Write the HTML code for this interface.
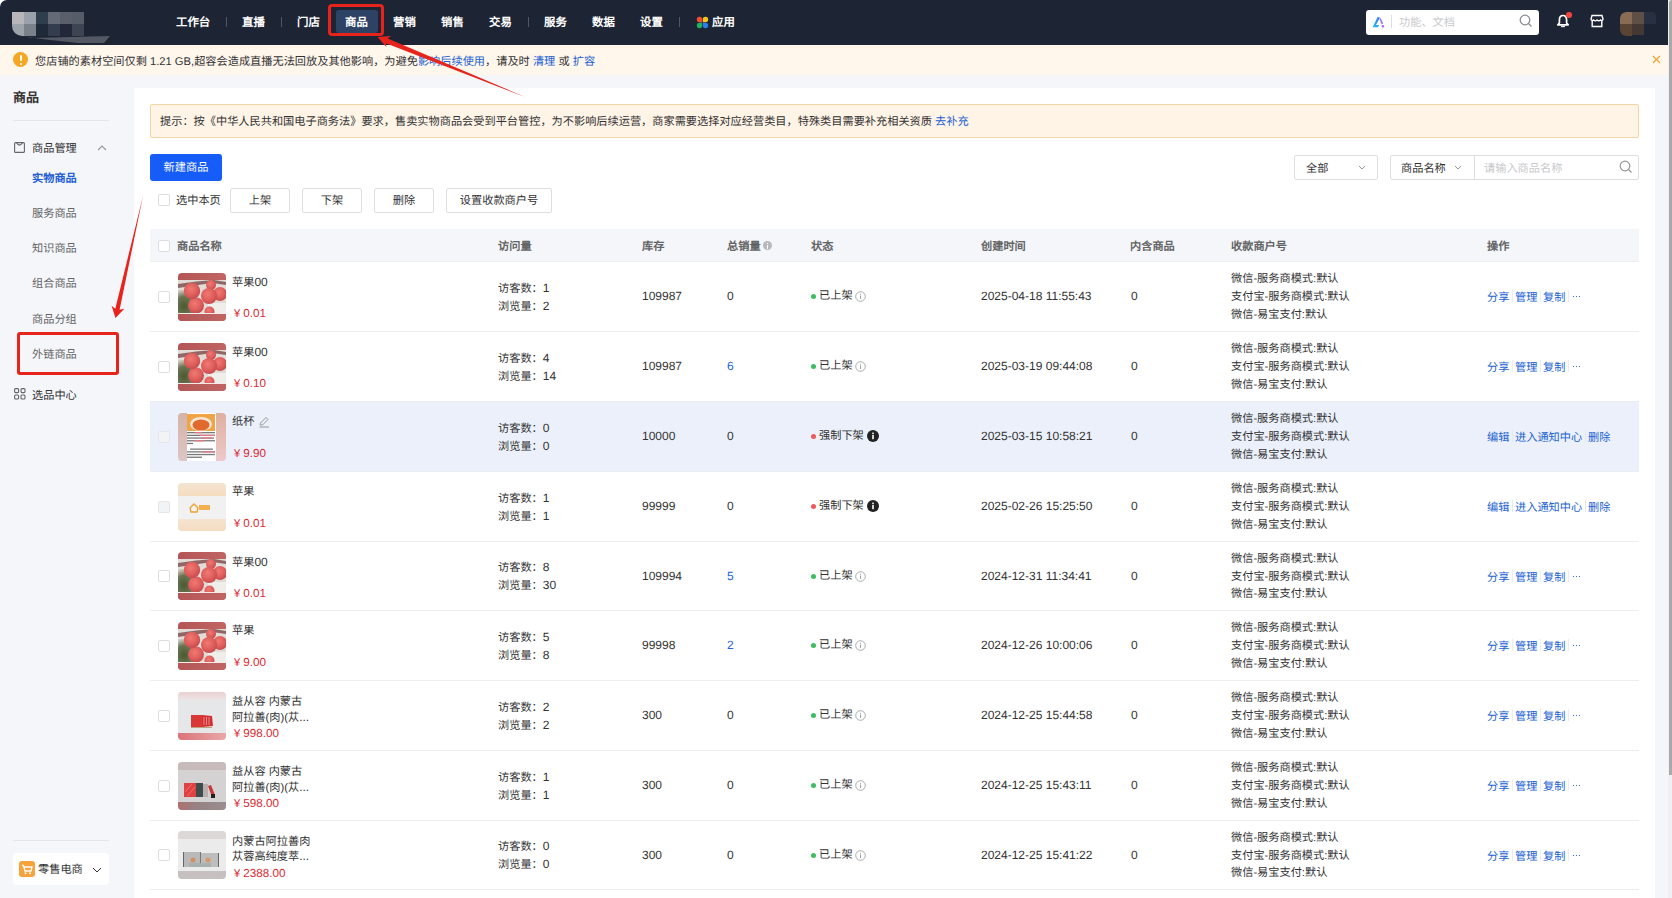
<!DOCTYPE html>
<html lang="zh-CN">
<head>
<meta charset="utf-8">
<style>
*{margin:0;padding:0;box-sizing:border-box}
html,body{width:1672px;height:898px;overflow:hidden;text-rendering:geometricPrecision;background:#f5f6fa;font-family:"Liberation Sans",sans-serif;color:#323233;font-size:11.2px}
.abs{position:absolute}
.t{position:absolute;white-space:nowrap;line-height:14px}
#hdr{position:absolute;left:0;top:0;width:1672px;height:45px;background:#1d2434}
.nav{position:absolute;top:16px;color:#fff;font-size:11.4px;font-weight:bold;line-height:14px;white-space:nowrap}
.sep{position:absolute;top:17px;width:1px;height:10px;background:#50576a}
#notice{position:absolute;left:0;top:45px;width:1672px;height:30px;background:#fff6ec}
#card{position:absolute;left:134px;top:88px;width:1521px;height:810px;background:#fff}
.lnk{color:#2262d2}
.c.lnk,.t .lnk{color:#2262d2}
.btn{position:absolute;height:25px;border:1px solid #dcdee0;border-radius:2px;background:#fff;color:#323233;font-size:11.2px;line-height:23px;text-align:center}
.cb{position:absolute;width:12px;height:12px;border:1px solid #dcdee0;border-radius:2px;background:#fff}
.row{position:absolute;left:150px;width:1489px;height:70px;border-bottom:1px solid #ebedf0}
.th{position:absolute;top:240px;font-size:11.2px;font-weight:bold;color:#646566;line-height:14px;white-space:nowrap}
.c{position:absolute;font-size:11.2px;line-height:14px;white-space:nowrap;color:#323233}
.price{color:#dc2832}
</style>
</head>
<body>

<div id="hdr"></div>
<svg class="abs" style="left:0;top:0" width="120" height="45" viewBox="0 0 120 45"><path d="M0 0 H7 A7 7 0 0 0 0 7 Z" fill="#fff"/><polygon points="16,34 30,38 110,36 104,43 78,43 50,40 26,37" fill="#535864"/></svg>
<div class="abs" style="left:12px;top:12px;width:12px;height:12px;background:#b8b6b8"></div>
<div class="abs" style="left:24px;top:12px;width:12px;height:12px;background:#9aa1aa"></div>
<div class="abs" style="left:36px;top:12px;width:12px;height:12px;background:#2f3e4d"></div>
<div class="abs" style="left:48px;top:12px;width:12px;height:12px;background:#646b77"></div>
<div class="abs" style="left:60px;top:12px;width:12px;height:12px;background:#5b5f6b"></div>
<div class="abs" style="left:72px;top:12px;width:12px;height:12px;background:#575c69"></div>
<div class="abs" style="left:12px;top:24px;width:12px;height:12px;background:#9da3ab;border-radius:0 0 0 10px;"></div>
<div class="abs" style="left:24px;top:24px;width:12px;height:12px;background:#7a818b;"></div>
<div class="abs" style="left:36px;top:24px;width:12px;height:12px;background:#1f2a38;"></div>
<div class="abs" style="left:48px;top:24px;width:12px;height:12px;background:#343d4e;"></div>
<div class="abs" style="left:60px;top:24px;width:12px;height:12px;background:#232739;"></div>
<div class="abs" style="left:72px;top:24px;width:12px;height:12px;background:#3e4452;"></div>
<div class="abs" style="left:336px;top:10px;width:42px;height:23px;background:#2e4266;border-radius:3px"></div>
<div class="nav" style="left:176px">工作台</div>
<div class="nav" style="left:242px">直播</div>
<div class="nav" style="left:297px">门店</div>
<div class="nav" style="left:345px">商品</div>
<div class="nav" style="left:393px">营销</div>
<div class="nav" style="left:441px">销售</div>
<div class="nav" style="left:489px">交易</div>
<div class="nav" style="left:544px">服务</div>
<div class="nav" style="left:592px">数据</div>
<div class="nav" style="left:640px">设置</div>
<div class="sep" style="left:226px"></div>
<div class="sep" style="left:281px"></div>
<div class="sep" style="left:528px"></div>
<div class="sep" style="left:679px"></div>
<svg class="abs" style="left:696px;top:16px" width="13" height="13" viewBox="0 0 13 13"><path d="M6.2 6.2 H3.6 A2.7 2.7 0 1 1 6.2 3.6 Z" fill="#f0502e"/><path d="M6.8 6.2 V3.6 A2.7 2.7 0 1 1 9.4 6.2 Z" fill="#f8c21c"/><path d="M6.2 6.8 V9.4 A2.7 2.7 0 1 1 3.6 6.8 Z" fill="#1fb35a"/><path d="M6.8 6.8 H9.4 A2.7 2.7 0 1 1 6.8 9.4 Z" fill="#2b7de9"/></svg>
<div class="nav" style="left:712px">应用</div>
<div class="abs" style="left:1366px;top:10px;width:173px;height:25px;background:#fff;border-radius:3px"></div>
<svg class="abs" style="left:1370px;top:14px" width="16" height="16" viewBox="0 0 16 16"><defs><linearGradient id="ga" x1="0" y1="1" x2="1" y2="0"><stop offset="0" stop-color="#1fc8f0"/><stop offset="1" stop-color="#3a6ff0"/></linearGradient></defs><polygon points="7.6,3 10,3.6 6,11 9,11 8,13.3 2.6,13.3" fill="url(#ga)"/><polygon points="9.6,5.2 10.6,3.8 13.2,9.6 11.6,10.4" fill="#9b7cf0"/><circle cx="12.9" cy="12.2" r="1.2" fill="#9b6cf0"/></svg>
<div class="abs" style="left:1391px;top:15px;width:1px;height:13px;background:#dcdee0"></div>
<div class="t" style="left:1399px;top:16px;color:#c8c9cc;font-size:11.2px">功能、文档</div>
<svg class="abs" style="left:1519px;top:14px" width="14" height="14" viewBox="0 0 14 14"><circle cx="6" cy="6" r="4.8" fill="none" stroke="#8a8c90" stroke-width="1.3"/><path d="M9.5 9.5 L12.5 12.5" stroke="#8a8c90" stroke-width="1.3"/></svg>
<svg class="abs" style="left:1556px;top:14px" width="14" height="14" viewBox="0 0 14 14"><path d="M7 1.5 C4.6 1.5 3.4 3.6 3.4 6 L3.4 9 L1.8 10.8 L12.2 10.8 L10.6 9 L10.6 6 C10.6 3.6 9.4 1.5 7 1.5Z" fill="none" stroke="#fff" stroke-width="1.7" stroke-linejoin="round"/><rect x="5" y="11.6" width="4" height="1.6" fill="#e8e8ee"/></svg>
<div class="abs" style="left:1566px;top:12px;width:5.5px;height:5.5px;border-radius:50%;background:#f0463c"></div>
<svg class="abs" style="left:1590px;top:14px" width="14" height="14" viewBox="0 0 14 14"><path d="M2 1.5 H12 L13 5 C13 6.5 11.5 7 10.5 6 C9.5 7 8 7 7 6 C6 7 4.5 7 3.5 6 C2.5 7 1 6.5 1 5 Z" fill="none" stroke="#fff" stroke-width="1.4"/><path d="M2.2 6.5 V12.5 H11.8 V6.5" fill="none" stroke="#fff" stroke-width="1.4"/></svg>
<div class="abs" style="left:1620px;top:12px;width:36px;height:24px;overflow:hidden;border-radius:6px 0 0 6px"><div class="abs" style="left:0;top:0;width:12px;height:12px;background:#8a6b55;border-radius:6px 0 0 0"></div><div class="abs" style="left:12px;top:0;width:12px;height:12px;background:#5e4f47"></div><div class="abs" style="left:24px;top:0;width:12px;height:12px;background:#283142;border-radius:0 4px 0 0"></div><div class="abs" style="left:0;top:12px;width:12px;height:12px;background:#5a4535;border-radius:0 0 0 6px"></div><div class="abs" style="left:12px;top:12px;width:12px;height:11px;background:#433833"></div></div>
<div id="notice"></div>
<div class="abs" style="left:13px;top:52px;width:15px;height:15px;border-radius:50%;background:#f5a623"></div>
<div class="abs" style="left:19.5px;top:55px;width:2px;height:6px;background:#fff;border-radius:1px"></div>
<div class="abs" style="left:19.5px;top:62.5px;width:2px;height:2px;background:#fff;border-radius:1px"></div>
<div class="t" style="left:35px;top:54.5px;font-size:11.2px;color:#323233">您店铺的素材空间仅剩 1.21 GB,超容会造成直播无法回放及其他影响，为避免<span class="lnk">影响后续使用</span>，请及时 <span class="lnk">清理</span> 或 <span class="lnk">扩容</span></div>
<svg class="abs" style="left:1652px;top:55px" width="9" height="9" viewBox="0 0 9 9"><path d="M1 1 L8 8 M8 1 L1 8" stroke="#f0a030" stroke-width="1.2"/></svg>
<div class="t" style="left:13px;top:90px;font-size:13px;font-weight:bold;color:#323233;line-height:16px">商品</div>
<div class="abs" style="left:13px;top:120px;width:96px;height:1px;background:#e4e6ea"></div>
<svg class="abs" style="left:14px;top:142px" width="11" height="11" viewBox="0 0 11 11"><rect x="0.6" y="0.6" width="9.8" height="9.8" rx="1" fill="none" stroke="#646566" stroke-width="1.1"/><path d="M2.5 0.8 Q5.5 5.5 8.5 0.8" fill="none" stroke="#646566" stroke-width="1.1"/></svg>
<div class="t" style="left:32px;top:142px;color:#323233">商品管理</div>
<svg class="abs" style="left:97px;top:145px" width="10" height="6" viewBox="0 0 10 6"><path d="M1 5 L5 1 L9 5" fill="none" stroke="#999" stroke-width="1.1"/></svg>
<div class="t" style="left:32px;top:172px;color:#1f5fd6;font-weight:bold">实物商品</div>
<div class="t" style="left:32px;top:207px;color:#646566">服务商品</div>
<div class="t" style="left:32px;top:242px;color:#646566">知识商品</div>
<div class="t" style="left:32px;top:277px;color:#646566">组合商品</div>
<div class="t" style="left:32px;top:313px;color:#646566">商品分组</div>
<div class="t" style="left:32px;top:348px;color:#646566">外链商品</div>
<svg class="abs" style="left:13.5px;top:388px" width="12" height="12" viewBox="0 0 12 12"><rect x="0.6" y="0.6" width="4" height="4" rx="1" fill="none" stroke="#646566" stroke-width="1.1"/><rect x="7" y="0.6" width="4" height="4" rx="1" fill="none" stroke="#646566" stroke-width="1.1"/><rect x="0.6" y="7" width="4" height="4" rx="1" fill="none" stroke="#646566" stroke-width="1.1"/><rect x="7" y="7" width="4" height="4" rx="1" fill="none" stroke="#646566" stroke-width="1.1"/></svg>
<div class="t" style="left:32px;top:388.5px;color:#323233">选品中心</div>
<div class="abs" style="left:13px;top:840px;width:96px;height:1px;background:#e4e6ea"></div>
<div class="abs" style="left:13px;top:853px;width:96px;height:32px;background:#fff;border-radius:4px"></div>
<div class="abs" style="left:19px;top:861px;width:16px;height:16px;background:#f7a23a;border-radius:3px"></div>
<svg class="abs" style="left:21px;top:864px" width="12" height="11" viewBox="0 0 12 11"><path d="M1 1.5 H2.5 L4 7 H10 L11 3 H3" fill="none" stroke="#fff" stroke-width="1.3"/><circle cx="4.5" cy="9.2" r="1" fill="#fff"/><circle cx="9" cy="9.2" r="1" fill="#fff"/></svg>
<div class="t" style="left:38px;top:863px;color:#323233">零售电商</div>
<svg class="abs" style="left:91.5px;top:866.5px" width="10" height="6" viewBox="0 0 10 6"><path d="M1 1 L5 5 L9 1" fill="none" stroke="#323233" stroke-width="1"/></svg>
<div id="card"></div>
<div class="abs" style="left:150px;top:104px;width:1489px;height:34px;background:#fff4e6;border:1px solid #f3d5a6;border-radius:2px"></div>
<div class="t" style="left:160px;top:115px;color:#323233">提示：按《中华人民共和国电子商务法》要求，售卖实物商品会受到平台管控，为不影响后续运营，商家需要选择对应经营类目，特殊类目需要补充相关资质 <span class="lnk">去补充</span></div>
<div class="abs" style="left:150px;top:154px;width:72px;height:27px;background:#165cf8;border-radius:3px;color:#fff;font-size:11.2px;font-weight:500;line-height:28px;text-align:center">新建商品</div>
<div class="cb" style="left:158px;top:194px"></div>
<div class="t" style="left:176px;top:194px">选中本页</div>
<div class="btn" style="left:230px;top:188px;width:60px;line-height:24px">上架</div>
<div class="btn" style="left:302px;top:188px;width:60px;line-height:24px">下架</div>
<div class="btn" style="left:374px;top:188px;width:60px;line-height:24px">删除</div>
<div class="btn" style="left:446px;top:188px;width:106px;line-height:24px">设置收款商户号</div>
<div class="abs" style="left:1294px;top:155px;width:84px;height:25px;border:1px solid #dcdee0;border-radius:2px"></div>
<div class="t" style="left:1306px;top:162px">全部</div>
<svg class="abs" style="left:1358px;top:165px" width="8" height="5" viewBox="0 0 8 5"><path d="M1 1 L4 4 L7 1" fill="none" stroke="#969799" stroke-width="1"/></svg>
<div class="abs" style="left:1390px;top:155px;width:249px;height:25px;border:1px solid #dcdee0;border-radius:2px"></div>
<div class="abs" style="left:1474px;top:156px;width:1px;height:23px;background:#dcdee0"></div>
<div class="t" style="left:1401px;top:162px">商品名称</div>
<svg class="abs" style="left:1454px;top:165px" width="8" height="5" viewBox="0 0 8 5"><path d="M1 1 L4 4 L7 1" fill="none" stroke="#969799" stroke-width="1"/></svg>
<div class="t" style="left:1484px;top:162px;color:#c8c9cc">请输入商品名称</div>
<svg class="abs" style="left:1619px;top:160px" width="14" height="14" viewBox="0 0 14 14"><circle cx="6" cy="6" r="4.8" fill="none" stroke="#969799" stroke-width="1.2"/><path d="M9.5 9.5 L12.5 12.5" stroke="#969799" stroke-width="1.2"/></svg>
<div class="abs" style="left:150px;top:229px;width:1489px;height:33px;background:#f4f6fa;border-bottom:1px solid #ebedf0"></div>
<div class="cb" style="left:158px;top:240px"></div>
<div class="th" style="left:177px">商品名称</div>
<div class="th" style="left:498px">访问量</div>
<div class="th" style="left:642px">库存</div>
<div class="th" style="left:727px">总销量</div>
<div class="th" style="left:811px">状态</div>
<div class="th" style="left:981px">创建时间</div>
<div class="th" style="left:1130px">内含商品</div>
<div class="th" style="left:1231px">收款商户号</div>
<div class="th" style="left:1487px">操作</div>
<div class="abs" style="left:763px;top:241px;width:9px;height:9px;border-radius:50%;background:#b8b9bc"></div>
<div class="abs" style="left:767px;top:243px;width:1px;height:1px;background:#fff"></div><div class="abs" style="left:767px;top:245px;width:1px;height:3.5px;background:#fff"></div>
<div class="abs" style="left:150px;top:262px;width:1489px;height:69px;background:#fff"></div>
<div class="abs" style="left:150px;top:331px;width:1489px;height:1px;background:#ebedf0"></div>
<div class="cb" style="left:158px;top:290.5px;"></div>
<svg class="abs" style="left:178px;top:273px" width="48" height="48" viewBox="0 0 48 48"><defs><radialGradient id="ap" cx="0.42" cy="0.38" r="0.65"><stop offset="0" stop-color="#f07a72"/><stop offset="0.55" stop-color="#e0605e"/><stop offset="1" stop-color="#c44a4c"/></radialGradient><radialGradient id="apg" cx="0.3" cy="0.7" r="0.7"><stop offset="0" stop-color="#4a5a32"/><stop offset="0.6" stop-color="#6a7452"/><stop offset="1" stop-color="#cfcabf"/></radialGradient><linearGradient id="apt" x1="0" y1="0" x2="1" y2="0"><stop offset="0" stop-color="#b45656"/><stop offset="1" stop-color="#c06464"/></linearGradient><clipPath id="apc"><rect x="0" y="0" width="48" height="48" rx="4"/></clipPath></defs><g clip-path="url(#apc)"><rect x="0" y="0" width="48" height="48" fill="url(#apt)"/><rect x="0" y="7" width="48" height="33" fill="#e2dcd6"/><rect x="0" y="17" width="20" height="23" fill="url(#apg)"/><rect x="30" y="30" width="18" height="10" fill="#f0eeea"/><path d="M0 11 L18 8.5 L36 7 L48 9 L48 12 L34 10 L0 15 Z" fill="#7a4a4a" opacity="0.8"/><circle cx="33" cy="12" r="5" fill="url(#ap)"/><circle cx="42" cy="21" r="7" fill="url(#ap)"/><circle cx="31.5" cy="38.5" r="5" fill="url(#ap)"/><circle cx="18" cy="32.5" r="8" fill="url(#ap)"/><circle cx="31" cy="23" r="8" fill="url(#ap)"/><circle cx="14" cy="18" r="8.2" fill="url(#ap)"/><rect x="0" y="40" width="48" height="1" fill="#f4ebe8"/><rect x="0" y="41" width="48" height="7" fill="url(#apt)"/></g></svg>
<div class="c" style="left:232px;top:275.0px">苹果<span style="font-size:12px">00</span></div>
<div class="c price" style="left:234px;top:307.0px">¥ <span style="font-size:11.7px">0.01</span></div>
<div class="c" style="left:498px;top:280.5px">访客数：<span style="font-size:12px">1</span></div>
<div class="c" style="left:498px;top:298.5px">浏览量：<span style="font-size:12px">2</span></div>
<div class="c" style="left:642px;top:289.0px;font-size:12px">109987</div>
<div class="c" style="left:727px;top:289.0px;color:#323233;font-size:12px">0</div>
<div class="abs" style="left:811px;top:294.0px;width:5px;height:5px;border-radius:50%;background:#3dbd5f"></div>
<div class="c" style="left:819px;top:289.0px">已上架</div>
<svg class="abs" style="left:854.5px;top:291.0px" width="11" height="11" viewBox="0 0 11 11"><circle cx="5.5" cy="5.5" r="4.8" fill="none" stroke="#a0a2a6" stroke-width="0.9"/><rect x="5" y="4.5" width="1" height="3.5" fill="#a0a2a6"/><rect x="5" y="2.8" width="1" height="1" fill="#a0a2a6"/></svg>
<div class="c" style="left:981px;top:289.0px;font-size:12px">2025-04-18 11:55:43</div>
<div class="c" style="left:1131px;top:289.0px;font-size:12px">0</div>
<div class="c" style="left:1231px;top:272.0px">微信-服务商模式:默认</div>
<div class="c" style="left:1231px;top:290.0px">支付宝-服务商模式:默认</div>
<div class="c" style="left:1231px;top:307.5px">微信-易宝支付:默认</div>
<div class="c lnk" style="left:1487px;top:291.0px">分享</div>
<div class="c lnk" style="left:1515px;top:291.0px">管理</div>
<div class="c lnk" style="left:1543px;top:291.0px">复制</div>
<div class="abs" style="left:1512px;top:290.0px;width:1px;height:12px;background:#ebedf0"></div>
<div class="abs" style="left:1540px;top:290.0px;width:1px;height:12px;background:#ebedf0"></div>
<div class="abs" style="left:1568px;top:290.0px;width:1px;height:12px;background:#ebedf0"></div>
<div class="abs" style="left:1572.5px;top:296.0px;width:1.3px;height:1.3px;background:#3a6fd8"></div>
<div class="abs" style="left:1575.5px;top:296.0px;width:1.3px;height:1.3px;background:#3a6fd8"></div>
<div class="abs" style="left:1578.5px;top:296.0px;width:1.3px;height:1.3px;background:#3a6fd8"></div>
<div class="abs" style="left:150px;top:332px;width:1489px;height:69px;background:#fff"></div>
<div class="abs" style="left:150px;top:401px;width:1489px;height:1px;background:#ebedf0"></div>
<div class="cb" style="left:158px;top:360.5px;"></div>
<svg class="abs" style="left:178px;top:343px" width="48" height="48" viewBox="0 0 48 48"><defs><radialGradient id="ap" cx="0.42" cy="0.38" r="0.65"><stop offset="0" stop-color="#f07a72"/><stop offset="0.55" stop-color="#e0605e"/><stop offset="1" stop-color="#c44a4c"/></radialGradient><radialGradient id="apg" cx="0.3" cy="0.7" r="0.7"><stop offset="0" stop-color="#4a5a32"/><stop offset="0.6" stop-color="#6a7452"/><stop offset="1" stop-color="#cfcabf"/></radialGradient><linearGradient id="apt" x1="0" y1="0" x2="1" y2="0"><stop offset="0" stop-color="#b45656"/><stop offset="1" stop-color="#c06464"/></linearGradient><clipPath id="apc"><rect x="0" y="0" width="48" height="48" rx="4"/></clipPath></defs><g clip-path="url(#apc)"><rect x="0" y="0" width="48" height="48" fill="url(#apt)"/><rect x="0" y="7" width="48" height="33" fill="#e2dcd6"/><rect x="0" y="17" width="20" height="23" fill="url(#apg)"/><rect x="30" y="30" width="18" height="10" fill="#f0eeea"/><path d="M0 11 L18 8.5 L36 7 L48 9 L48 12 L34 10 L0 15 Z" fill="#7a4a4a" opacity="0.8"/><circle cx="33" cy="12" r="5" fill="url(#ap)"/><circle cx="42" cy="21" r="7" fill="url(#ap)"/><circle cx="31.5" cy="38.5" r="5" fill="url(#ap)"/><circle cx="18" cy="32.5" r="8" fill="url(#ap)"/><circle cx="31" cy="23" r="8" fill="url(#ap)"/><circle cx="14" cy="18" r="8.2" fill="url(#ap)"/><rect x="0" y="40" width="48" height="1" fill="#f4ebe8"/><rect x="0" y="41" width="48" height="7" fill="url(#apt)"/></g></svg>
<div class="c" style="left:232px;top:345.0px">苹果<span style="font-size:12px">00</span></div>
<div class="c price" style="left:234px;top:377.0px">¥ <span style="font-size:11.7px">0.10</span></div>
<div class="c" style="left:498px;top:350.5px">访客数：<span style="font-size:12px">4</span></div>
<div class="c" style="left:498px;top:368.5px">浏览量：<span style="font-size:12px">14</span></div>
<div class="c" style="left:642px;top:359.0px;font-size:12px">109987</div>
<div class="c" style="left:727px;top:359.0px;color:#2262d2;font-size:12px">6</div>
<div class="abs" style="left:811px;top:364.0px;width:5px;height:5px;border-radius:50%;background:#3dbd5f"></div>
<div class="c" style="left:819px;top:359.0px">已上架</div>
<svg class="abs" style="left:854.5px;top:361.0px" width="11" height="11" viewBox="0 0 11 11"><circle cx="5.5" cy="5.5" r="4.8" fill="none" stroke="#a0a2a6" stroke-width="0.9"/><rect x="5" y="4.5" width="1" height="3.5" fill="#a0a2a6"/><rect x="5" y="2.8" width="1" height="1" fill="#a0a2a6"/></svg>
<div class="c" style="left:981px;top:359.0px;font-size:12px">2025-03-19 09:44:08</div>
<div class="c" style="left:1131px;top:359.0px;font-size:12px">0</div>
<div class="c" style="left:1231px;top:342.0px">微信-服务商模式:默认</div>
<div class="c" style="left:1231px;top:360.0px">支付宝-服务商模式:默认</div>
<div class="c" style="left:1231px;top:377.5px">微信-易宝支付:默认</div>
<div class="c lnk" style="left:1487px;top:361.0px">分享</div>
<div class="c lnk" style="left:1515px;top:361.0px">管理</div>
<div class="c lnk" style="left:1543px;top:361.0px">复制</div>
<div class="abs" style="left:1512px;top:360.0px;width:1px;height:12px;background:#ebedf0"></div>
<div class="abs" style="left:1540px;top:360.0px;width:1px;height:12px;background:#ebedf0"></div>
<div class="abs" style="left:1568px;top:360.0px;width:1px;height:12px;background:#ebedf0"></div>
<div class="abs" style="left:1572.5px;top:366.0px;width:1.3px;height:1.3px;background:#3a6fd8"></div>
<div class="abs" style="left:1575.5px;top:366.0px;width:1.3px;height:1.3px;background:#3a6fd8"></div>
<div class="abs" style="left:1578.5px;top:366.0px;width:1.3px;height:1.3px;background:#3a6fd8"></div>
<div class="abs" style="left:150px;top:402px;width:1489px;height:69px;background:#ebf0fa"></div>
<div class="abs" style="left:150px;top:471px;width:1489px;height:1px;background:#ebedf0"></div>
<div class="cb" style="left:158px;top:430.5px;background:#f2f3f5;border-color:#e4e6ea"></div>
<svg class="abs" style="left:178px;top:413px" width="48" height="48" viewBox="0 0 48 48"><defs><clipPath id="cpc"><rect x="0" y="0" width="48" height="48" rx="4"/></clipPath><linearGradient id="cpl" x1="0" y1="0" x2="0" y2="1"><stop offset="0" stop-color="#d6b3a8"/><stop offset="1" stop-color="#dcc6c4"/></linearGradient><linearGradient id="cpr" x1="0" y1="0" x2="0" y2="1"><stop offset="0" stop-color="#dfaf9f"/><stop offset="1" stop-color="#eccaca"/></linearGradient></defs><g clip-path="url(#cpc)"><rect x="0" y="0" width="9" height="48" fill="url(#cpl)"/><rect x="38" y="0" width="10" height="48" fill="url(#cpr)"/><rect x="9" y="0" width="29" height="48" fill="#fff"/><rect x="9" y="1" width="28" height="17" fill="#f0a448"/><ellipse cx="23" cy="11" rx="11" ry="7" fill="#f6e6d6"/><ellipse cx="23" cy="12" rx="8.5" ry="5.5" fill="#e2692e"/><rect x="9" y="19" width="28" height="1.3" fill="#7a7a7a"/><rect x="17" y="19" width="7" height="1.3" fill="#e27a86"/><rect x="9" y="21.7" width="28" height="1.3" fill="#7a7a7a"/><rect x="22" y="21.7" width="15" height="1.3" fill="#e27a86"/><rect x="9" y="24.4" width="27" height="1.3" fill="#7a7a7a"/><rect x="24" y="24.4" width="10" height="1.3" fill="#e27a86"/><rect x="9" y="27.1" width="28" height="1.3" fill="#7a7a7a"/><rect x="16" y="27.1" width="10" height="1.3" fill="#e27a86"/><rect x="9" y="29.8" width="6" height="1.3" fill="#7a7a7a"/><rect x="12" y="35.5" width="23" height="1.3" fill="#7a7a7a"/><rect x="9" y="38.2" width="28" height="1.3" fill="#7a7a7a"/><rect x="24" y="38.2" width="13" height="1.3" fill="#e27a86"/><rect x="9" y="40.9" width="28" height="1.3" fill="#7a7a7a"/><rect x="9" y="43.6" width="15" height="1.3" fill="#7a7a7a"/></g></svg>
<div class="c" style="left:232px;top:415.0px">纸杯</div>
<svg class="abs" style="left:258px;top:415.5px" width="12" height="12" viewBox="0 0 12 12"><path d="M2 9 L2.5 7 L8 1.5 L10 3.5 L4.5 9 Z M1.5 11 H11" fill="none" stroke="#969799" stroke-width="1"/></svg>
<div class="c price" style="left:234px;top:447.0px">¥ <span style="font-size:11.7px">9.90</span></div>
<div class="c" style="left:498px;top:420.5px">访客数：<span style="font-size:12px">0</span></div>
<div class="c" style="left:498px;top:438.5px">浏览量：<span style="font-size:12px">0</span></div>
<div class="c" style="left:642px;top:429.0px;font-size:12px">10000</div>
<div class="c" style="left:727px;top:429.0px;color:#323233;font-size:12px">0</div>
<div class="abs" style="left:811px;top:434.0px;width:5px;height:5px;border-radius:50%;background:#ee5a5a"></div>
<div class="c" style="left:819px;top:429.0px">强制下架</div>
<svg class="abs" style="left:867px;top:430.0px" width="12" height="12" viewBox="0 0 12 12"><circle cx="6" cy="6" r="6" fill="#222"/><rect x="5.2" y="5" width="1.6" height="4.2" fill="#fff"/><rect x="5.2" y="2.6" width="1.6" height="1.6" fill="#fff"/></svg>
<div class="c" style="left:981px;top:429.0px;font-size:12px">2025-03-15 10:58:21</div>
<div class="c" style="left:1131px;top:429.0px;font-size:12px">0</div>
<div class="c" style="left:1231px;top:412.0px">微信-服务商模式:默认</div>
<div class="c" style="left:1231px;top:430.0px">支付宝-服务商模式:默认</div>
<div class="c" style="left:1231px;top:447.5px">微信-易宝支付:默认</div>
<div class="c lnk" style="left:1487px;top:431.0px">编辑</div>
<div class="abs" style="left:1512px;top:430.0px;width:1px;height:12px;background:#e4e8f0"></div>
<div class="c lnk" style="left:1515px;top:431.0px">进入通知中心</div>
<div class="abs" style="left:1585px;top:430.0px;width:1px;height:12px;background:#e4e8f0"></div>
<div class="c lnk" style="left:1588px;top:431.0px">删除</div>
<div class="abs" style="left:150px;top:472px;width:1489px;height:69px;background:#fff"></div>
<div class="abs" style="left:150px;top:541px;width:1489px;height:1px;background:#ebedf0"></div>
<div class="cb" style="left:158px;top:500.5px;background:#f2f3f5;border-color:#e4e6ea"></div>
<svg class="abs" style="left:178px;top:483px" width="48" height="48" viewBox="0 0 48 48"><defs><clipPath id="lgc"><rect x="0" y="0" width="48" height="48" rx="4"/></clipPath><linearGradient id="lgt" x1="0" y1="0" x2="0" y2="1"><stop offset="0" stop-color="#f4e4d2"/><stop offset="1" stop-color="#f5dcc0"/></linearGradient></defs><g clip-path="url(#lgc)"><rect x="0" y="0" width="48" height="48" fill="#f1f1f1"/><rect x="0" y="0" width="48" height="13" fill="url(#lgt)"/><rect x="0" y="36" width="48" height="12" fill="url(#lgt)"/><path d="M12 25 L16 21 L20 25 L19 29 L13 29 Z" fill="none" stroke="#f0a030" stroke-width="1.3"/><rect x="21" y="22" width="11" height="5" fill="#f2b050"/></g></svg>
<div class="c" style="left:232px;top:485.0px">苹果</div>
<div class="c price" style="left:234px;top:517.0px">¥ <span style="font-size:11.7px">0.01</span></div>
<div class="c" style="left:498px;top:490.5px">访客数：<span style="font-size:12px">1</span></div>
<div class="c" style="left:498px;top:508.5px">浏览量：<span style="font-size:12px">1</span></div>
<div class="c" style="left:642px;top:499.0px;font-size:12px">99999</div>
<div class="c" style="left:727px;top:499.0px;color:#323233;font-size:12px">0</div>
<div class="abs" style="left:811px;top:504.0px;width:5px;height:5px;border-radius:50%;background:#ee5a5a"></div>
<div class="c" style="left:819px;top:499.0px">强制下架</div>
<svg class="abs" style="left:867px;top:500.0px" width="12" height="12" viewBox="0 0 12 12"><circle cx="6" cy="6" r="6" fill="#222"/><rect x="5.2" y="5" width="1.6" height="4.2" fill="#fff"/><rect x="5.2" y="2.6" width="1.6" height="1.6" fill="#fff"/></svg>
<div class="c" style="left:981px;top:499.0px;font-size:12px">2025-02-26 15:25:50</div>
<div class="c" style="left:1131px;top:499.0px;font-size:12px">0</div>
<div class="c" style="left:1231px;top:482.0px">微信-服务商模式:默认</div>
<div class="c" style="left:1231px;top:500.0px">支付宝-服务商模式:默认</div>
<div class="c" style="left:1231px;top:517.5px">微信-易宝支付:默认</div>
<div class="c lnk" style="left:1487px;top:501.0px">编辑</div>
<div class="abs" style="left:1512px;top:500.0px;width:1px;height:12px;background:#e4e8f0"></div>
<div class="c lnk" style="left:1515px;top:501.0px">进入通知中心</div>
<div class="abs" style="left:1585px;top:500.0px;width:1px;height:12px;background:#e4e8f0"></div>
<div class="c lnk" style="left:1588px;top:501.0px">删除</div>
<div class="abs" style="left:150px;top:542px;width:1489px;height:68px;background:#fff"></div>
<div class="abs" style="left:150px;top:610px;width:1489px;height:1px;background:#ebedf0"></div>
<div class="cb" style="left:158px;top:570.0px;"></div>
<svg class="abs" style="left:178px;top:552px" width="48" height="48" viewBox="0 0 48 48"><defs><radialGradient id="ap" cx="0.42" cy="0.38" r="0.65"><stop offset="0" stop-color="#f07a72"/><stop offset="0.55" stop-color="#e0605e"/><stop offset="1" stop-color="#c44a4c"/></radialGradient><radialGradient id="apg" cx="0.3" cy="0.7" r="0.7"><stop offset="0" stop-color="#4a5a32"/><stop offset="0.6" stop-color="#6a7452"/><stop offset="1" stop-color="#cfcabf"/></radialGradient><linearGradient id="apt" x1="0" y1="0" x2="1" y2="0"><stop offset="0" stop-color="#b45656"/><stop offset="1" stop-color="#c06464"/></linearGradient><clipPath id="apc"><rect x="0" y="0" width="48" height="48" rx="4"/></clipPath></defs><g clip-path="url(#apc)"><rect x="0" y="0" width="48" height="48" fill="url(#apt)"/><rect x="0" y="7" width="48" height="33" fill="#e2dcd6"/><rect x="0" y="17" width="20" height="23" fill="url(#apg)"/><rect x="30" y="30" width="18" height="10" fill="#f0eeea"/><path d="M0 11 L18 8.5 L36 7 L48 9 L48 12 L34 10 L0 15 Z" fill="#7a4a4a" opacity="0.8"/><circle cx="33" cy="12" r="5" fill="url(#ap)"/><circle cx="42" cy="21" r="7" fill="url(#ap)"/><circle cx="31.5" cy="38.5" r="5" fill="url(#ap)"/><circle cx="18" cy="32.5" r="8" fill="url(#ap)"/><circle cx="31" cy="23" r="8" fill="url(#ap)"/><circle cx="14" cy="18" r="8.2" fill="url(#ap)"/><rect x="0" y="40" width="48" height="1" fill="#f4ebe8"/><rect x="0" y="41" width="48" height="7" fill="url(#apt)"/></g></svg>
<div class="c" style="left:232px;top:554.5px">苹果<span style="font-size:12px">00</span></div>
<div class="c price" style="left:234px;top:586.5px">¥ <span style="font-size:11.7px">0.01</span></div>
<div class="c" style="left:498px;top:560.0px">访客数：<span style="font-size:12px">8</span></div>
<div class="c" style="left:498px;top:578.0px">浏览量：<span style="font-size:12px">30</span></div>
<div class="c" style="left:642px;top:568.5px;font-size:12px">109994</div>
<div class="c" style="left:727px;top:568.5px;color:#2262d2;font-size:12px">5</div>
<div class="abs" style="left:811px;top:573.5px;width:5px;height:5px;border-radius:50%;background:#3dbd5f"></div>
<div class="c" style="left:819px;top:568.5px">已上架</div>
<svg class="abs" style="left:854.5px;top:570.5px" width="11" height="11" viewBox="0 0 11 11"><circle cx="5.5" cy="5.5" r="4.8" fill="none" stroke="#a0a2a6" stroke-width="0.9"/><rect x="5" y="4.5" width="1" height="3.5" fill="#a0a2a6"/><rect x="5" y="2.8" width="1" height="1" fill="#a0a2a6"/></svg>
<div class="c" style="left:981px;top:568.5px;font-size:12px">2024-12-31 11:34:41</div>
<div class="c" style="left:1131px;top:568.5px;font-size:12px">0</div>
<div class="c" style="left:1231px;top:551.5px">微信-服务商模式:默认</div>
<div class="c" style="left:1231px;top:569.5px">支付宝-服务商模式:默认</div>
<div class="c" style="left:1231px;top:587.0px">微信-易宝支付:默认</div>
<div class="c lnk" style="left:1487px;top:570.5px">分享</div>
<div class="c lnk" style="left:1515px;top:570.5px">管理</div>
<div class="c lnk" style="left:1543px;top:570.5px">复制</div>
<div class="abs" style="left:1512px;top:569.5px;width:1px;height:12px;background:#ebedf0"></div>
<div class="abs" style="left:1540px;top:569.5px;width:1px;height:12px;background:#ebedf0"></div>
<div class="abs" style="left:1568px;top:569.5px;width:1px;height:12px;background:#ebedf0"></div>
<div class="abs" style="left:1572.5px;top:575.5px;width:1.3px;height:1.3px;background:#3a6fd8"></div>
<div class="abs" style="left:1575.5px;top:575.5px;width:1.3px;height:1.3px;background:#3a6fd8"></div>
<div class="abs" style="left:1578.5px;top:575.5px;width:1.3px;height:1.3px;background:#3a6fd8"></div>
<div class="abs" style="left:150px;top:611px;width:1489px;height:69px;background:#fff"></div>
<div class="abs" style="left:150px;top:680px;width:1489px;height:1px;background:#ebedf0"></div>
<div class="cb" style="left:158px;top:639.5px;"></div>
<svg class="abs" style="left:178px;top:622px" width="48" height="48" viewBox="0 0 48 48"><defs><radialGradient id="ap" cx="0.42" cy="0.38" r="0.65"><stop offset="0" stop-color="#f07a72"/><stop offset="0.55" stop-color="#e0605e"/><stop offset="1" stop-color="#c44a4c"/></radialGradient><radialGradient id="apg" cx="0.3" cy="0.7" r="0.7"><stop offset="0" stop-color="#4a5a32"/><stop offset="0.6" stop-color="#6a7452"/><stop offset="1" stop-color="#cfcabf"/></radialGradient><linearGradient id="apt" x1="0" y1="0" x2="1" y2="0"><stop offset="0" stop-color="#b45656"/><stop offset="1" stop-color="#c06464"/></linearGradient><clipPath id="apc"><rect x="0" y="0" width="48" height="48" rx="4"/></clipPath></defs><g clip-path="url(#apc)"><rect x="0" y="0" width="48" height="48" fill="url(#apt)"/><rect x="0" y="7" width="48" height="33" fill="#e2dcd6"/><rect x="0" y="17" width="20" height="23" fill="url(#apg)"/><rect x="30" y="30" width="18" height="10" fill="#f0eeea"/><path d="M0 11 L18 8.5 L36 7 L48 9 L48 12 L34 10 L0 15 Z" fill="#7a4a4a" opacity="0.8"/><circle cx="33" cy="12" r="5" fill="url(#ap)"/><circle cx="42" cy="21" r="7" fill="url(#ap)"/><circle cx="31.5" cy="38.5" r="5" fill="url(#ap)"/><circle cx="18" cy="32.5" r="8" fill="url(#ap)"/><circle cx="31" cy="23" r="8" fill="url(#ap)"/><circle cx="14" cy="18" r="8.2" fill="url(#ap)"/><rect x="0" y="40" width="48" height="1" fill="#f4ebe8"/><rect x="0" y="41" width="48" height="7" fill="url(#apt)"/></g></svg>
<div class="c" style="left:232px;top:624.0px">苹果</div>
<div class="c price" style="left:234px;top:656.0px">¥ <span style="font-size:11.7px">9.00</span></div>
<div class="c" style="left:498px;top:629.5px">访客数：<span style="font-size:12px">5</span></div>
<div class="c" style="left:498px;top:647.5px">浏览量：<span style="font-size:12px">8</span></div>
<div class="c" style="left:642px;top:638.0px;font-size:12px">99998</div>
<div class="c" style="left:727px;top:638.0px;color:#2262d2;font-size:12px">2</div>
<div class="abs" style="left:811px;top:643.0px;width:5px;height:5px;border-radius:50%;background:#3dbd5f"></div>
<div class="c" style="left:819px;top:638.0px">已上架</div>
<svg class="abs" style="left:854.5px;top:640.0px" width="11" height="11" viewBox="0 0 11 11"><circle cx="5.5" cy="5.5" r="4.8" fill="none" stroke="#a0a2a6" stroke-width="0.9"/><rect x="5" y="4.5" width="1" height="3.5" fill="#a0a2a6"/><rect x="5" y="2.8" width="1" height="1" fill="#a0a2a6"/></svg>
<div class="c" style="left:981px;top:638.0px;font-size:12px">2024-12-26 10:00:06</div>
<div class="c" style="left:1131px;top:638.0px;font-size:12px">0</div>
<div class="c" style="left:1231px;top:621.0px">微信-服务商模式:默认</div>
<div class="c" style="left:1231px;top:639.0px">支付宝-服务商模式:默认</div>
<div class="c" style="left:1231px;top:656.5px">微信-易宝支付:默认</div>
<div class="c lnk" style="left:1487px;top:640.0px">分享</div>
<div class="c lnk" style="left:1515px;top:640.0px">管理</div>
<div class="c lnk" style="left:1543px;top:640.0px">复制</div>
<div class="abs" style="left:1512px;top:639.0px;width:1px;height:12px;background:#ebedf0"></div>
<div class="abs" style="left:1540px;top:639.0px;width:1px;height:12px;background:#ebedf0"></div>
<div class="abs" style="left:1568px;top:639.0px;width:1px;height:12px;background:#ebedf0"></div>
<div class="abs" style="left:1572.5px;top:645.0px;width:1.3px;height:1.3px;background:#3a6fd8"></div>
<div class="abs" style="left:1575.5px;top:645.0px;width:1.3px;height:1.3px;background:#3a6fd8"></div>
<div class="abs" style="left:1578.5px;top:645.0px;width:1.3px;height:1.3px;background:#3a6fd8"></div>
<div class="abs" style="left:150px;top:681px;width:1489px;height:69px;background:#fff"></div>
<div class="abs" style="left:150px;top:750px;width:1489px;height:1px;background:#ebedf0"></div>
<div class="cb" style="left:158px;top:709.5px;"></div>
<svg class="abs" style="left:178px;top:692px" width="48" height="48" viewBox="0 0 48 48"><defs><clipPath id="bxc"><rect x="0" y="0" width="48" height="48" rx="4"/></clipPath><linearGradient id="b1t" x1="0" y1="0" x2="0" y2="1"><stop offset="0" stop-color="#ead0d2"/><stop offset="1" stop-color="#eee4e5"/></linearGradient><linearGradient id="b1b" x1="0" y1="0" x2="1" y2="0"><stop offset="0" stop-color="#dc7478"/><stop offset="1" stop-color="#e8a8aa"/></linearGradient></defs><g clip-path="url(#bxc)"><rect x="0" y="0" width="48" height="48" fill="#e6e7e9"/><rect x="0" y="0" width="48" height="8" fill="url(#b1t)"/><rect x="0" y="41" width="48" height="7" fill="url(#b1b)"/><rect x="13" y="23" width="11" height="12" fill="#d83836"/><polygon points="24,23 34,24 35,34 24,35" fill="#d43030"/><path d="M26 25 V33 M28.5 25 V33 M31 25 V33" stroke="#f0a0a0" stroke-width="0.8"/><rect x="13" y="35" width="21" height="1" fill="#c0a080"/></g></svg>
<div class="c" style="left:232px;top:695.0px">益从容 内蒙古</div>
<div class="c" style="left:232px;top:709.5px">阿拉善(肉)(苁<span style="font-size:12px">...</span></div>
<div class="c price" style="left:234px;top:727.0px">¥ <span style="font-size:11.7px">998.00</span></div>
<div class="c" style="left:498px;top:699.5px">访客数：<span style="font-size:12px">2</span></div>
<div class="c" style="left:498px;top:717.5px">浏览量：<span style="font-size:12px">2</span></div>
<div class="c" style="left:642px;top:708.0px;font-size:12px">300</div>
<div class="c" style="left:727px;top:708.0px;color:#323233;font-size:12px">0</div>
<div class="abs" style="left:811px;top:713.0px;width:5px;height:5px;border-radius:50%;background:#3dbd5f"></div>
<div class="c" style="left:819px;top:708.0px">已上架</div>
<svg class="abs" style="left:854.5px;top:710.0px" width="11" height="11" viewBox="0 0 11 11"><circle cx="5.5" cy="5.5" r="4.8" fill="none" stroke="#a0a2a6" stroke-width="0.9"/><rect x="5" y="4.5" width="1" height="3.5" fill="#a0a2a6"/><rect x="5" y="2.8" width="1" height="1" fill="#a0a2a6"/></svg>
<div class="c" style="left:981px;top:708.0px;font-size:12px">2024-12-25 15:44:58</div>
<div class="c" style="left:1131px;top:708.0px;font-size:12px">0</div>
<div class="c" style="left:1231px;top:691.0px">微信-服务商模式:默认</div>
<div class="c" style="left:1231px;top:709.0px">支付宝-服务商模式:默认</div>
<div class="c" style="left:1231px;top:726.5px">微信-易宝支付:默认</div>
<div class="c lnk" style="left:1487px;top:710.0px">分享</div>
<div class="c lnk" style="left:1515px;top:710.0px">管理</div>
<div class="c lnk" style="left:1543px;top:710.0px">复制</div>
<div class="abs" style="left:1512px;top:709.0px;width:1px;height:12px;background:#ebedf0"></div>
<div class="abs" style="left:1540px;top:709.0px;width:1px;height:12px;background:#ebedf0"></div>
<div class="abs" style="left:1568px;top:709.0px;width:1px;height:12px;background:#ebedf0"></div>
<div class="abs" style="left:1572.5px;top:715.0px;width:1.3px;height:1.3px;background:#3a6fd8"></div>
<div class="abs" style="left:1575.5px;top:715.0px;width:1.3px;height:1.3px;background:#3a6fd8"></div>
<div class="abs" style="left:1578.5px;top:715.0px;width:1.3px;height:1.3px;background:#3a6fd8"></div>
<div class="abs" style="left:150px;top:751px;width:1489px;height:69px;background:#fff"></div>
<div class="abs" style="left:150px;top:820px;width:1489px;height:1px;background:#ebedf0"></div>
<div class="cb" style="left:158px;top:779.5px;"></div>
<svg class="abs" style="left:178px;top:762px" width="48" height="48" viewBox="0 0 48 48"><defs><clipPath id="bxc"><rect x="0" y="0" width="48" height="48" rx="4"/></clipPath><linearGradient id="b2b" x1="0" y1="0" x2="1" y2="0"><stop offset="0" stop-color="#b07070"/><stop offset="0.4" stop-color="#958284"/><stop offset="1" stop-color="#9a8e90"/></linearGradient></defs><g clip-path="url(#bxc)"><rect x="0" y="0" width="48" height="48" fill="#d4d2d3"/><rect x="0" y="0" width="48" height="8" fill="#c7bbbc"/><rect x="0" y="40" width="48" height="8" fill="url(#b2b)"/><polygon points="6,21 18,21 18,35 6,35" fill="#e04040"/><path d="M7 30 L14 22 M9 34 L17 25" stroke="#f07070" stroke-width="1"/><polygon points="18,21 25,21 25,35 18,35" fill="#3f4c4c"/><rect x="25" y="22" width="5" height="13" fill="#b8b0b0"/><polygon points="30,24 33,23 37,33 34,35" fill="#c83838"/><rect x="33" y="32" width="4" height="4" fill="#222"/></g></svg>
<div class="c" style="left:232px;top:765.0px">益从容 内蒙古</div>
<div class="c" style="left:232px;top:779.5px">阿拉善(肉)(苁<span style="font-size:12px">...</span></div>
<div class="c price" style="left:234px;top:797.0px">¥ <span style="font-size:11.7px">598.00</span></div>
<div class="c" style="left:498px;top:769.5px">访客数：<span style="font-size:12px">1</span></div>
<div class="c" style="left:498px;top:787.5px">浏览量：<span style="font-size:12px">1</span></div>
<div class="c" style="left:642px;top:778.0px;font-size:12px">300</div>
<div class="c" style="left:727px;top:778.0px;color:#323233;font-size:12px">0</div>
<div class="abs" style="left:811px;top:783.0px;width:5px;height:5px;border-radius:50%;background:#3dbd5f"></div>
<div class="c" style="left:819px;top:778.0px">已上架</div>
<svg class="abs" style="left:854.5px;top:780.0px" width="11" height="11" viewBox="0 0 11 11"><circle cx="5.5" cy="5.5" r="4.8" fill="none" stroke="#a0a2a6" stroke-width="0.9"/><rect x="5" y="4.5" width="1" height="3.5" fill="#a0a2a6"/><rect x="5" y="2.8" width="1" height="1" fill="#a0a2a6"/></svg>
<div class="c" style="left:981px;top:778.0px;font-size:12px">2024-12-25 15:43:11</div>
<div class="c" style="left:1131px;top:778.0px;font-size:12px">0</div>
<div class="c" style="left:1231px;top:761.0px">微信-服务商模式:默认</div>
<div class="c" style="left:1231px;top:779.0px">支付宝-服务商模式:默认</div>
<div class="c" style="left:1231px;top:796.5px">微信-易宝支付:默认</div>
<div class="c lnk" style="left:1487px;top:780.0px">分享</div>
<div class="c lnk" style="left:1515px;top:780.0px">管理</div>
<div class="c lnk" style="left:1543px;top:780.0px">复制</div>
<div class="abs" style="left:1512px;top:779.0px;width:1px;height:12px;background:#ebedf0"></div>
<div class="abs" style="left:1540px;top:779.0px;width:1px;height:12px;background:#ebedf0"></div>
<div class="abs" style="left:1568px;top:779.0px;width:1px;height:12px;background:#ebedf0"></div>
<div class="abs" style="left:1572.5px;top:785.0px;width:1.3px;height:1.3px;background:#3a6fd8"></div>
<div class="abs" style="left:1575.5px;top:785.0px;width:1.3px;height:1.3px;background:#3a6fd8"></div>
<div class="abs" style="left:1578.5px;top:785.0px;width:1.3px;height:1.3px;background:#3a6fd8"></div>
<div class="abs" style="left:150px;top:821px;width:1489px;height:68px;background:#fff"></div>
<div class="abs" style="left:150px;top:889px;width:1489px;height:1px;background:#ebedf0"></div>
<div class="cb" style="left:158px;top:849.0px;"></div>
<svg class="abs" style="left:178px;top:831px" width="48" height="48" viewBox="0 0 48 48"><defs><clipPath id="bxc"><rect x="0" y="0" width="48" height="48" rx="4"/></clipPath></defs><g clip-path="url(#bxc)"><rect x="0" y="0" width="48" height="48" fill="#ebebeb"/><rect x="0" y="0" width="48" height="8" fill="#dcd8d8"/><rect x="0" y="40" width="48" height="8" fill="#c6c0c0"/><rect x="5" y="21" width="17" height="15" fill="#b9b9b9"/><rect x="23" y="22" width="18" height="14" fill="#bdbdbd"/><rect x="5" y="21" width="1" height="15" fill="#666"/><rect x="22" y="21" width="1" height="15" fill="#777"/><rect x="40" y="22" width="1" height="14" fill="#666"/><rect x="11" y="32" width="22" height="4" fill="#a8b0b0"/><circle cx="15" cy="29" r="2.5" fill="#d09060"/><circle cx="30" cy="29" r="2.5" fill="#d89868"/></g></svg>
<div class="c" style="left:232px;top:834.5px">内蒙古阿拉善肉</div>
<div class="c" style="left:232px;top:849.0px">苁蓉高纯度萃<span style="font-size:12px">...</span></div>
<div class="c price" style="left:234px;top:866.5px">¥ <span style="font-size:11.7px">2388.00</span></div>
<div class="c" style="left:498px;top:839.0px">访客数：<span style="font-size:12px">0</span></div>
<div class="c" style="left:498px;top:857.0px">浏览量：<span style="font-size:12px">0</span></div>
<div class="c" style="left:642px;top:847.5px;font-size:12px">300</div>
<div class="c" style="left:727px;top:847.5px;color:#323233;font-size:12px">0</div>
<div class="abs" style="left:811px;top:852.5px;width:5px;height:5px;border-radius:50%;background:#3dbd5f"></div>
<div class="c" style="left:819px;top:847.5px">已上架</div>
<svg class="abs" style="left:854.5px;top:849.5px" width="11" height="11" viewBox="0 0 11 11"><circle cx="5.5" cy="5.5" r="4.8" fill="none" stroke="#a0a2a6" stroke-width="0.9"/><rect x="5" y="4.5" width="1" height="3.5" fill="#a0a2a6"/><rect x="5" y="2.8" width="1" height="1" fill="#a0a2a6"/></svg>
<div class="c" style="left:981px;top:847.5px;font-size:12px">2024-12-25 15:41:22</div>
<div class="c" style="left:1131px;top:847.5px;font-size:12px">0</div>
<div class="c" style="left:1231px;top:830.5px">微信-服务商模式:默认</div>
<div class="c" style="left:1231px;top:848.5px">支付宝-服务商模式:默认</div>
<div class="c" style="left:1231px;top:866.0px">微信-易宝支付:默认</div>
<div class="c lnk" style="left:1487px;top:849.5px">分享</div>
<div class="c lnk" style="left:1515px;top:849.5px">管理</div>
<div class="c lnk" style="left:1543px;top:849.5px">复制</div>
<div class="abs" style="left:1512px;top:848.5px;width:1px;height:12px;background:#ebedf0"></div>
<div class="abs" style="left:1540px;top:848.5px;width:1px;height:12px;background:#ebedf0"></div>
<div class="abs" style="left:1568px;top:848.5px;width:1px;height:12px;background:#ebedf0"></div>
<div class="abs" style="left:1572.5px;top:854.5px;width:1.3px;height:1.3px;background:#3a6fd8"></div>
<div class="abs" style="left:1575.5px;top:854.5px;width:1.3px;height:1.3px;background:#3a6fd8"></div>
<div class="abs" style="left:1578.5px;top:854.5px;width:1.3px;height:1.3px;background:#3a6fd8"></div>
<div class="abs" style="left:328px;top:4px;width:56px;height:32px;border:3px solid #e8231b;border-radius:4px"></div>
<div class="abs" style="left:17px;top:331.5px;width:102px;height:43px;border:3px solid #e8231b;border-radius:3px"></div>
<svg class="abs" style="left:0;top:0" width="1672" height="898" viewBox="0 0 1672 898"><polygon points="377.5,37.0 390.9,36.0 387.7,38.4 525.0,97.0 385.8,43.2 386.4,47.1" fill="#e8231b"/><polygon points="115.5,318.0 111.6,305.8 115.3,308.7 143.0,196.0 119.6,309.7 124.3,308.7" fill="#e8231b"/></svg>
<div class="abs" style="left:1668px;top:0;width:4px;height:898px;background:#f0f0f0"></div>
<div class="abs" style="left:1669px;top:0;width:3px;height:775px;background:#a9a9a9;border-radius:3px 0 0 0"></div>
</body></html>
